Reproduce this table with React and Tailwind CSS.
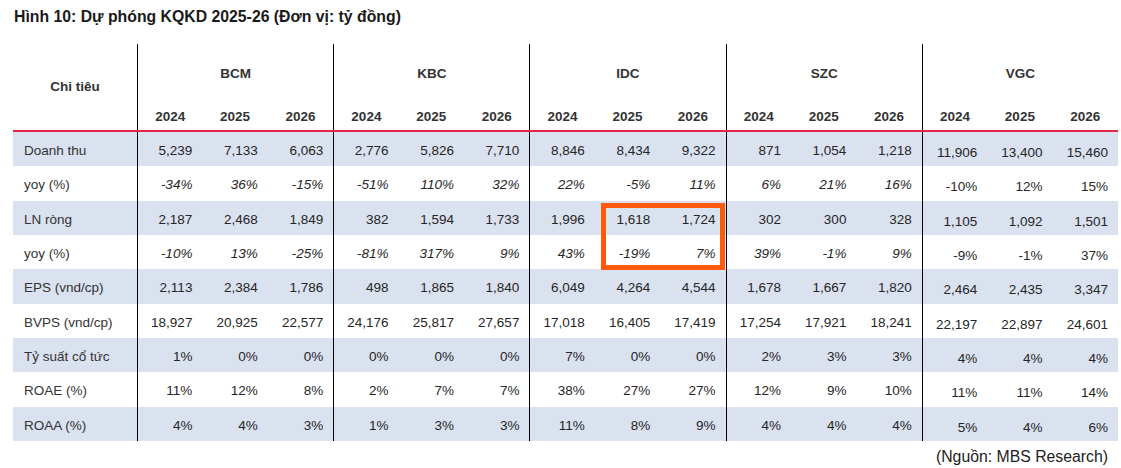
import React from "react";

const groups = ["BCM", "KBC", "IDC", "SZC", "VGC"];
const years = ["2024", "2025", "2026"];

// mỗi dòng: nhãn, 15 giá trị (5 mã x 3 năm), in nghiêng hay không
const rows = [
  { label: "Doanh thu", values: ["5,239", "7,133", "6,063", "2,776", "5,826", "7,710", "8,846", "8,434", "9,322", "871", "1,054", "1,218", "11,906", "13,400", "15,460"] },
  { label: "yoy (%)", italic: true, values: ["-34%", "36%", "-15%", "-51%", "110%", "32%", "22%", "-5%", "11%", "6%", "21%", "16%", "-10%", "12%", "15%"] },
  { label: "LN ròng", values: ["2,187", "2,468", "1,849", "382", "1,594", "1,733", "1,996", "1,618", "1,724", "302", "300", "328", "1,105", "1,092", "1,501"] },
  { label: "yoy (%)", italic: true, values: ["-10%", "13%", "-25%", "-81%", "317%", "9%", "43%", "-19%", "7%", "39%", "-1%", "9%", "-9%", "-1%", "37%"] },
  { label: "EPS (vnd/cp)", values: ["2,113", "2,384", "1,786", "498", "1,865", "1,840", "6,049", "4,264", "4,544", "1,678", "1,667", "1,820", "2,464", "2,435", "3,347"] },
  { label: "BVPS (vnd/cp)", values: ["18,927", "20,925", "22,577", "24,176", "25,817", "27,657", "17,018", "16,405", "17,419", "17,254", "17,921", "18,241", "22,197", "22,897", "24,601"] },
  { label: "Tỷ suất cổ tức", values: ["1%", "0%", "0%", "0%", "0%", "0%", "7%", "0%", "0%", "2%", "3%", "3%", "4%", "4%", "4%"] },
  { label: "ROAE (%)", values: ["11%", "12%", "8%", "2%", "7%", "7%", "38%", "27%", "27%", "12%", "9%", "10%", "11%", "11%", "14%"] },
  { label: "ROAA (%)", values: ["4%", "4%", "3%", "1%", "3%", "3%", "11%", "8%", "9%", "4%", "4%", "4%", "5%", "4%", "6%"] },
];

const gridCols = "grid grid-cols-[124px_repeat(15,minmax(0,1fr))]";

export default function App() {
  return (
    <div className="relative h-[468px] w-[1121px] overflow-hidden bg-white font-['Liberation_Sans',Arial,sans-serif] text-[#262626]">
      <h1 className="pl-[14px] pt-[7px] text-[15.8px] font-bold leading-[20px] text-[#1a1a1a]">
        Hình 10: Dự phóng KQKD 2025-26 (Đơn vị: tỷ đồng)
      </h1>

      <div className="relative ml-[13px] mt-[17px] w-[1105px] text-[13.5px] leading-[16px]">
        {/* tiêu đề bảng */}
        <div className={gridCols}>
          <div className="row-span-2 flex h-[86px] items-center justify-center font-bold text-[#333]">
            Chi tiêu
          </div>
          {groups.map((g) => (
            <div
              key={g}
              className="col-span-3 flex h-[60px] items-center justify-center border-l border-black font-bold text-[#333]"
            >
              {g}
            </div>
          ))}
          {groups.map((g) =>
            years.map((y, i) => (
              <div
                key={g + y}
                className={`flex h-[26px] items-center justify-center font-bold text-[#333] ${i === 0 ? "border-l border-black" : ""}`}
              >
                {y}
              </div>
            ))
          )}
        </div>

        <div className="h-[2px] w-full bg-[#e3264b]" />

        {rows.map((r, ri) => (
          <div key={ri} className={`${gridCols} h-[34.33px] ${ri % 2 === 0 ? "bg-[#dae1ef]" : ""}`}>
            <div className="flex items-center pl-[11px] pt-[4px] text-[#333]">{r.label}</div>
            {r.values.map((v, vi) => {
              const vgc = vi >= 12;
              return (
                <div
                  key={vi}
                  className={`flex items-center justify-end pr-[10px] ${vgc ? "pt-[8px]" : "pt-[4px]"} ${vi % 3 === 0 ? "border-l border-black" : ""} ${r.italic && !vgc ? "italic" : ""}`}
                >
                  {v}
                </div>
              );
            })}
          </div>
        ))}

        {/* khung cam đánh dấu IDC 2025-26 */}
        <div className="absolute left-[588px] top-[159px] h-[67px] w-[124px] border-[5px] border-[#fd5a0c]" />
      </div>

      <div className="absolute bottom-[1px] right-[13px] text-[15.8px] leading-[20px] text-[#222]">
        (Nguồn: MBS Research)
      </div>
    </div>
  );
}
